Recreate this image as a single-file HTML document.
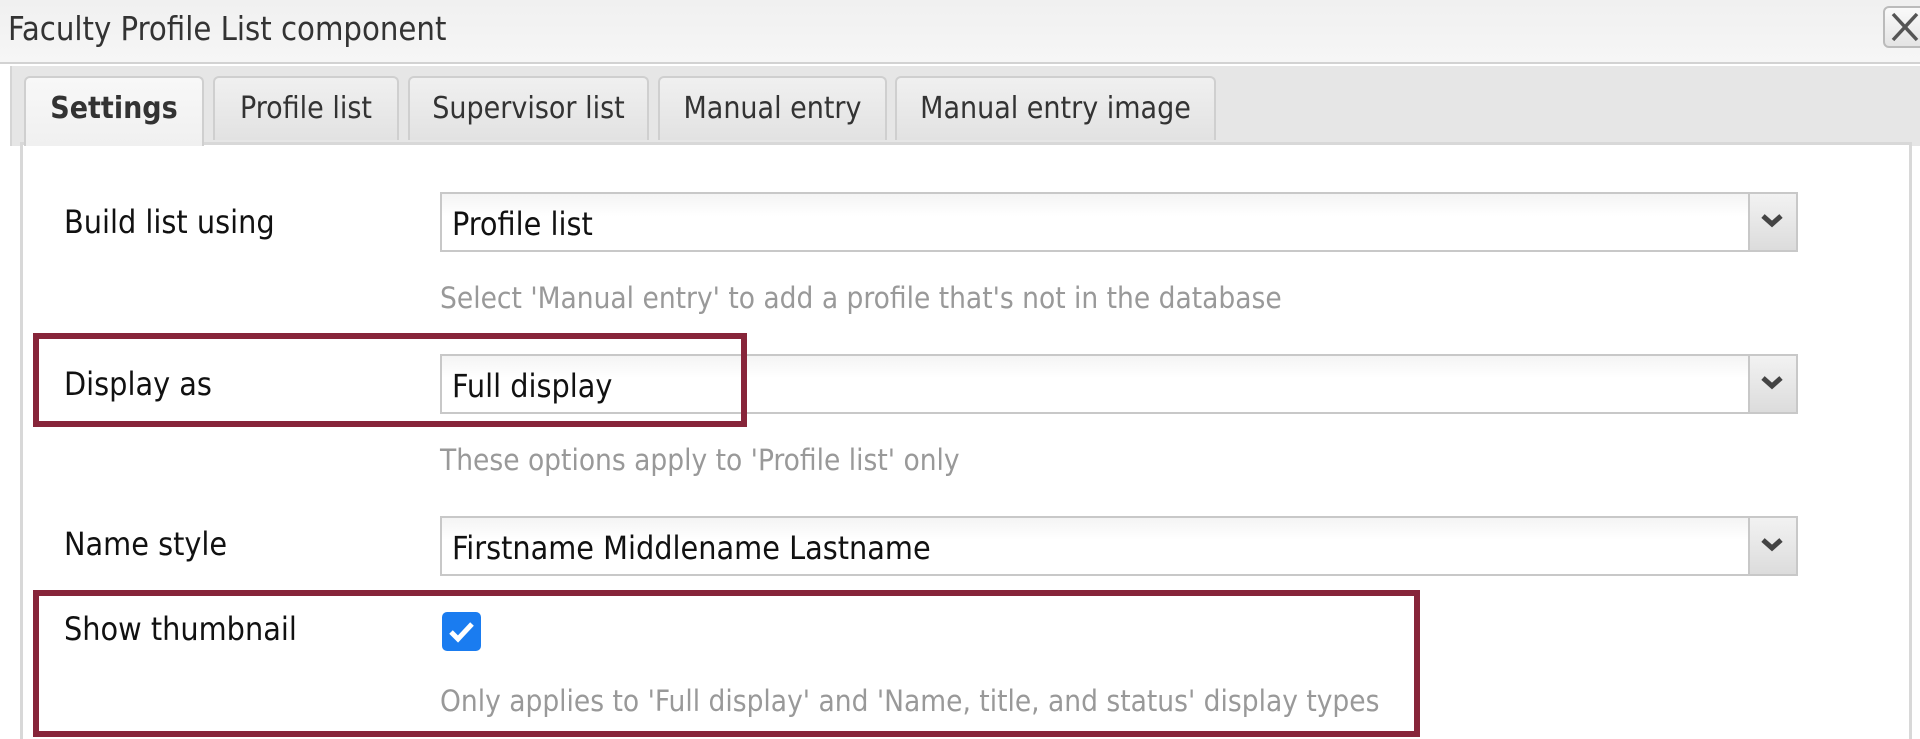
<!DOCTYPE html>
<html><head><meta charset="utf-8"><style>
*{box-sizing:border-box;margin:0;padding:0}
html,body{width:1920px;height:739px;overflow:hidden}
body{background:#fff;font-family:"DejaVu Sans Condensed","DejaVu Sans","Liberation Sans",sans-serif;position:relative}
.abs{position:absolute}
.top{left:0;top:0;width:1920px;height:64px;background:linear-gradient(#f0f0f0,#f6f6f6);border-bottom:2px solid #d2d2d2}
.title{left:8px;top:10px;font-size:32.5px;color:#333;white-space:nowrap}
.close{left:1883px;top:6px;width:44px;height:42px;border:2px solid #bbb;border-radius:6px;background:linear-gradient(#fafafa,#e4e4e4)}
.strip{left:10px;top:66px;width:1912px;height:80px;background:#e6e6e6;border-left:2px solid #d5d5d5}
.tab{top:76px;height:64px;border:2px solid #cfcfcf;border-bottom:none;border-radius:6px 6px 0 0;background:linear-gradient(#f0f0f0,#e2e2e2);font-size:30px;color:#333;text-align:center;line-height:62px;white-space:nowrap}
.tab.act{background:linear-gradient(#f8f8f8,#ececec);font-weight:bold;height:70px}
.panel{left:20px;top:142px;width:1892px;height:597px;background:#fff;border:3px solid #d8d8d8;border-bottom:none}
.lbl{left:64px;font-size:32px;color:#111;white-space:nowrap}
.sel{left:440px;width:1358px;height:60px;border:2px solid #c8c8c8;background:linear-gradient(#f4f4f4,#fff 40%);font-size:32px;color:#111;padding-left:10px;line-height:60px;white-space:nowrap}
.arr{position:absolute;right:0;top:0;width:48px;height:100%;border-left:2px solid #c8c8c8;background:linear-gradient(#f2f2f2,#dcdcdc)}
.help{left:440px;font-size:29.5px;color:#999;white-space:nowrap}
.red{border:6px solid #87253a}
</style></head><body>
<div class="abs top"></div>
<div class="abs title">Faculty Profile List component</div>
<div class="abs close"><svg width="40" height="38" viewBox="0 0 40 38"><path d="M8 6L32 32M32 6L8 32" stroke="#555" stroke-width="3.5"/></svg></div>
<div class="abs strip"></div>
<div class="abs tab" style="left:213px;width:186px">Profile list</div>
<div class="abs tab" style="left:408px;width:241px">Supervisor list</div>
<div class="abs tab" style="left:658px;width:229px">Manual entry</div>
<div class="abs tab" style="left:895px;width:321px">Manual entry image</div>
<div class="abs panel"></div>
<div class="abs tab act" style="left:24px;width:180px;background:linear-gradient(#f8f8f8,#f0f0f0)">Settings</div>

<div class="abs lbl" style="top:203px">Build list using</div>
<div class="abs sel" style="top:192px">Profile list<div class="arr"><svg width="44" height="56" viewBox="0 0 44 56"><path d="M13 22l9 8 9-8" stroke="#444" stroke-width="5" fill="none"/></svg></div></div>
<div class="abs help" style="top:281px">Select 'Manual entry' to add a profile that's not in the database</div>

<div class="abs lbl" style="top:365px">Display as</div>
<div class="abs sel" style="top:354px">Full display<div class="arr"><svg width="44" height="56" viewBox="0 0 44 56"><path d="M13 22l9 8 9-8" stroke="#444" stroke-width="5" fill="none"/></svg></div></div>
<div class="abs help" style="top:443px">These options apply to 'Profile list' only</div>

<div class="abs lbl" style="top:525px">Name style</div>
<div class="abs sel" style="top:516px">Firstname Middlename Lastname<div class="arr"><svg width="44" height="56" viewBox="0 0 44 56"><path d="M13 22l9 8 9-8" stroke="#444" stroke-width="5" fill="none"/></svg></div></div>

<div class="abs lbl" style="top:610px">Show thumbnail</div>
<div class="abs" style="left:442px;top:612px;width:39px;height:39px;background:#1a7cf0;border-radius:5px"><svg width="39" height="39" viewBox="0 0 39 39"><path d="M9 20l7 7 14-15" stroke="#fff" stroke-width="5" fill="none"/></svg></div>
<div class="abs help" style="top:684px">Only applies to 'Full display' and 'Name, title, and status' display types</div>

<div class="abs red" style="left:33px;top:333px;width:714px;height:94px"></div>
<div class="abs red" style="left:33px;top:590px;width:1387px;height:147px"></div>
</body></html>
